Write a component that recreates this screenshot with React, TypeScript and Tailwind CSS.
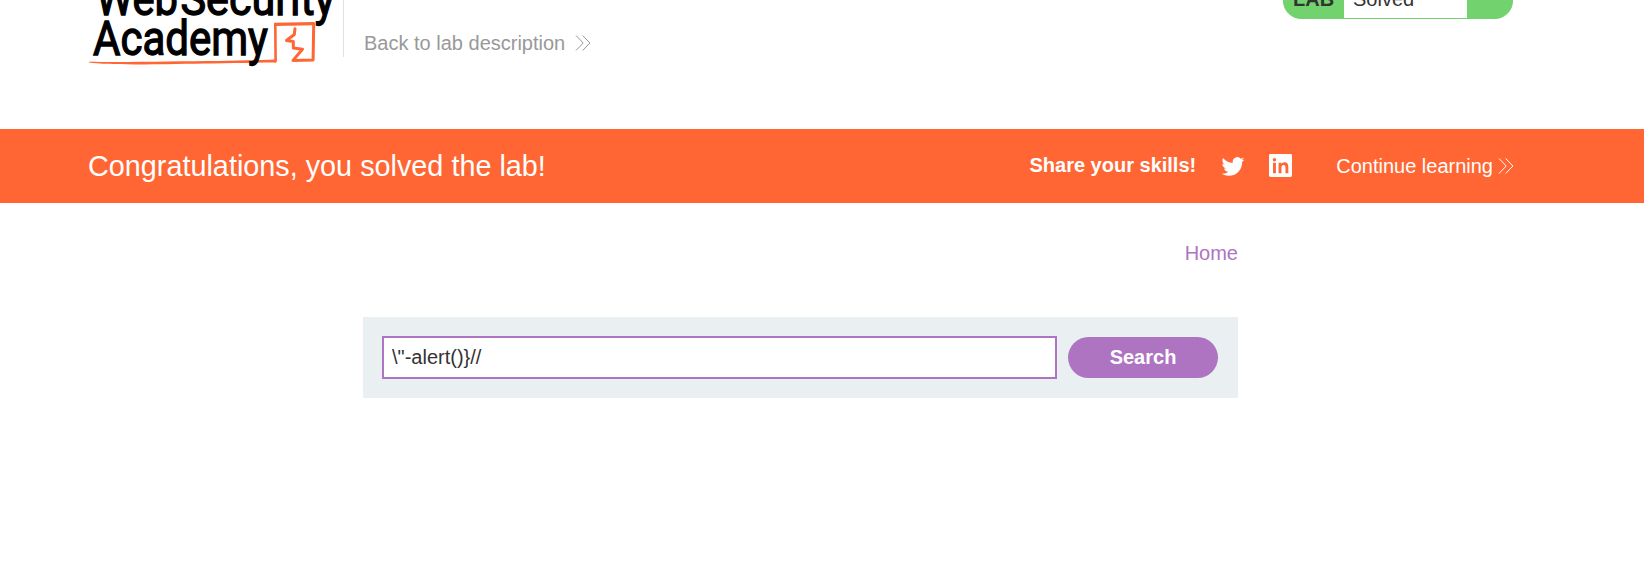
function Chevrons() {
  return (
    <svg width="16" height="16" viewBox="0 0 16 16" fill="none" stroke="currentColor" strokeWidth="1" className="shrink-0">
      <path d="M1 .5 8.2 8 1 15.500M7.700 .500 14.900 8 7.700 15.500" />
    </svg>
  );
}

function Logo() {
  return (
    <svg width="255" height="70" viewBox="0 0 255 70" className="shrink-0" aria-label="Web Security Academy">
      <g fontFamily="Roboto, sans-serif" fontWeight="400" fontSize="47.500" fill="#000" stroke="#000" strokeWidth="1.300">
        <text x="8" y="14.500" textLength="82" lengthAdjust="spacingAndGlyphs">Web</text>
        <text x="92.500" y="14.500" textLength="154.500" lengthAdjust="spacingAndGlyphs">Security</text>
      </g>
      <g fill="none" stroke="#ff6633" strokeLinejoin="round" strokeLinecap="round">
        <path strokeWidth="2.600" d="M187.600 61.300 187.300 24" />
        <path strokeWidth="3.300" d="M187.500 24.300 225.500 23.600" />
        <path strokeWidth="3" d="M225.700 24 225.100 60 205 60.400 214.500 49.200 205.300 48 205.300 41.500 198.500 40.500 206.300 34.500 207 28.800" />
      </g>
      <path fill="#ff6633" d="M1 61.800C35 62.600 90 61.300 130 61.100L188 59.600V62.600C165 62.800 145 63.200 125 63.400 90 63.600 25 66 1 62.600Z" />
      <text x="5" y="55.200" textLength="175" lengthAdjust="spacingAndGlyphs" fontFamily="Roboto, sans-serif" fontWeight="400" fontSize="47.500" fill="#000" stroke="#000" strokeWidth="1.300">Academy</text>
    </svg>
  );
}

export default function App() {
  return (
    <div className="h-[575px] overflow-hidden bg-white font-['Liberation_Sans',Arial,sans-serif] text-[20px] leading-6 text-[#333332]">
      <header className="flex h-[129px] items-start justify-between pr-[131px] pl-[88px]">
        <div className="flex items-start">
          <Logo />
          <div className="h-[57px] w-px bg-[#e1e1e1]" />
          <a className="mt-[31px] ml-5 flex items-center gap-2.5 whitespace-nowrap text-[#999]">
            Back to lab description <Chevrons />
          </a>
        </div>
        <div className="-mt-[23px] flex h-[42px] w-[230px] overflow-hidden rounded-[18px] border border-[#72d26e] bg-[#72d26e]">
          <span className="w-[60px] pt-[9px] pl-[9px] font-bold">LAB</span>
          <span className="w-[123px] bg-white pt-[9px] pl-[9px]">Solved</span>
        </div>
      </header>

      <section className="flex h-[74px] items-center justify-between bg-[#ff6633] pr-[130px] pl-[88px] text-white">
        <h1 className="text-[28.8px] leading-8">Congratulations, you solved the lab!</h1>
        <div className="flex items-center">
          <span className="mb-[3px] font-bold">Share your skills!</span>
          <svg width="24" height="23" viewBox="0 0 24 24" fill="currentColor" className="ml-[25px]">
            <path d="M23.950 4.570a10 10 0 0 1-2.820.770 4.960 4.960 0 0 0 2.160-2.720c-.950.550-2 .950-3.130 1.180a4.920 4.920 0 0 0-8.380 4.480C7.690 8.090 4.070 6.130 1.640 3.160a4.820 4.820 0 0 0-.670 2.480c0 1.710.870 3.210 2.190 4.100a4.900 4.900 0 0 1-2.230-.620v.060a4.920 4.920 0 0 0 3.950 4.830 5 5 0 0 1-2.210.080 4.940 4.940 0 0 0 4.600 3.420A9.870 9.870 0 0 1 0 19.540a13.990 13.990 0 0 0 7.560 2.210c9.050 0 14-7.500 14-13.980 0-.210 0-.420-.020-.630a9.940 9.940 0 0 0 2.410-2.570Z" />
          </svg>
          <svg width="23" height="23" viewBox="0 0 24 24" fill="currentColor" className="mb-px ml-6">
            <path fillRule="evenodd" d="M1.500 0h21A1.500 1.500 0 0 1 24 1.500v21a1.500 1.500 0 0 1-1.500 1.500h-21A1.500 1.500 0 0 1 0 22.500v-21A1.500 1.500 0 0 1 1.500 0ZM4.200 9v11h3V9ZM5.700 4.200a1.800 1.800 0 1 0 0 3.600 1.800 1.800 0 0 0 0-3.600ZM10 9v11h3v-5.600c0-1.500.400-2.900 2.200-2.900s2 1.600 2 3V20h3v-6c0-3.100-.900-5.300-4.200-5.300-1.600 0-2.600.800-3.100 1.700h-.050V9Z" />
          </svg>
          <a className="ml-11 flex items-center gap-[5px] whitespace-nowrap">
            Continue learning <Chevrons />
          </a>
        </div>
      </section>

      <main className="ml-[363px] w-[875px]">
        <nav className="flex justify-end pt-[38px] text-[#ae74c1]">
          <a>Home</a>
        </nav>
        <form className="mt-[52px] flex h-[81px] items-center bg-[#eaeff2] px-[19px]">
          <input
            type="text"
            defaultValue={'\\"-alert()}//'}
            className="h-[43px] w-[675px] border-2 border-[#ae74c1] bg-white px-2 outline-none"
          />
          <button type="button" className="ml-[11px] h-[41px] w-[150px] rounded-full bg-[#ae74c1] pb-0.5 font-bold text-white">
            Search
          </button>
        </form>
      </main>
    </div>
  );
}
